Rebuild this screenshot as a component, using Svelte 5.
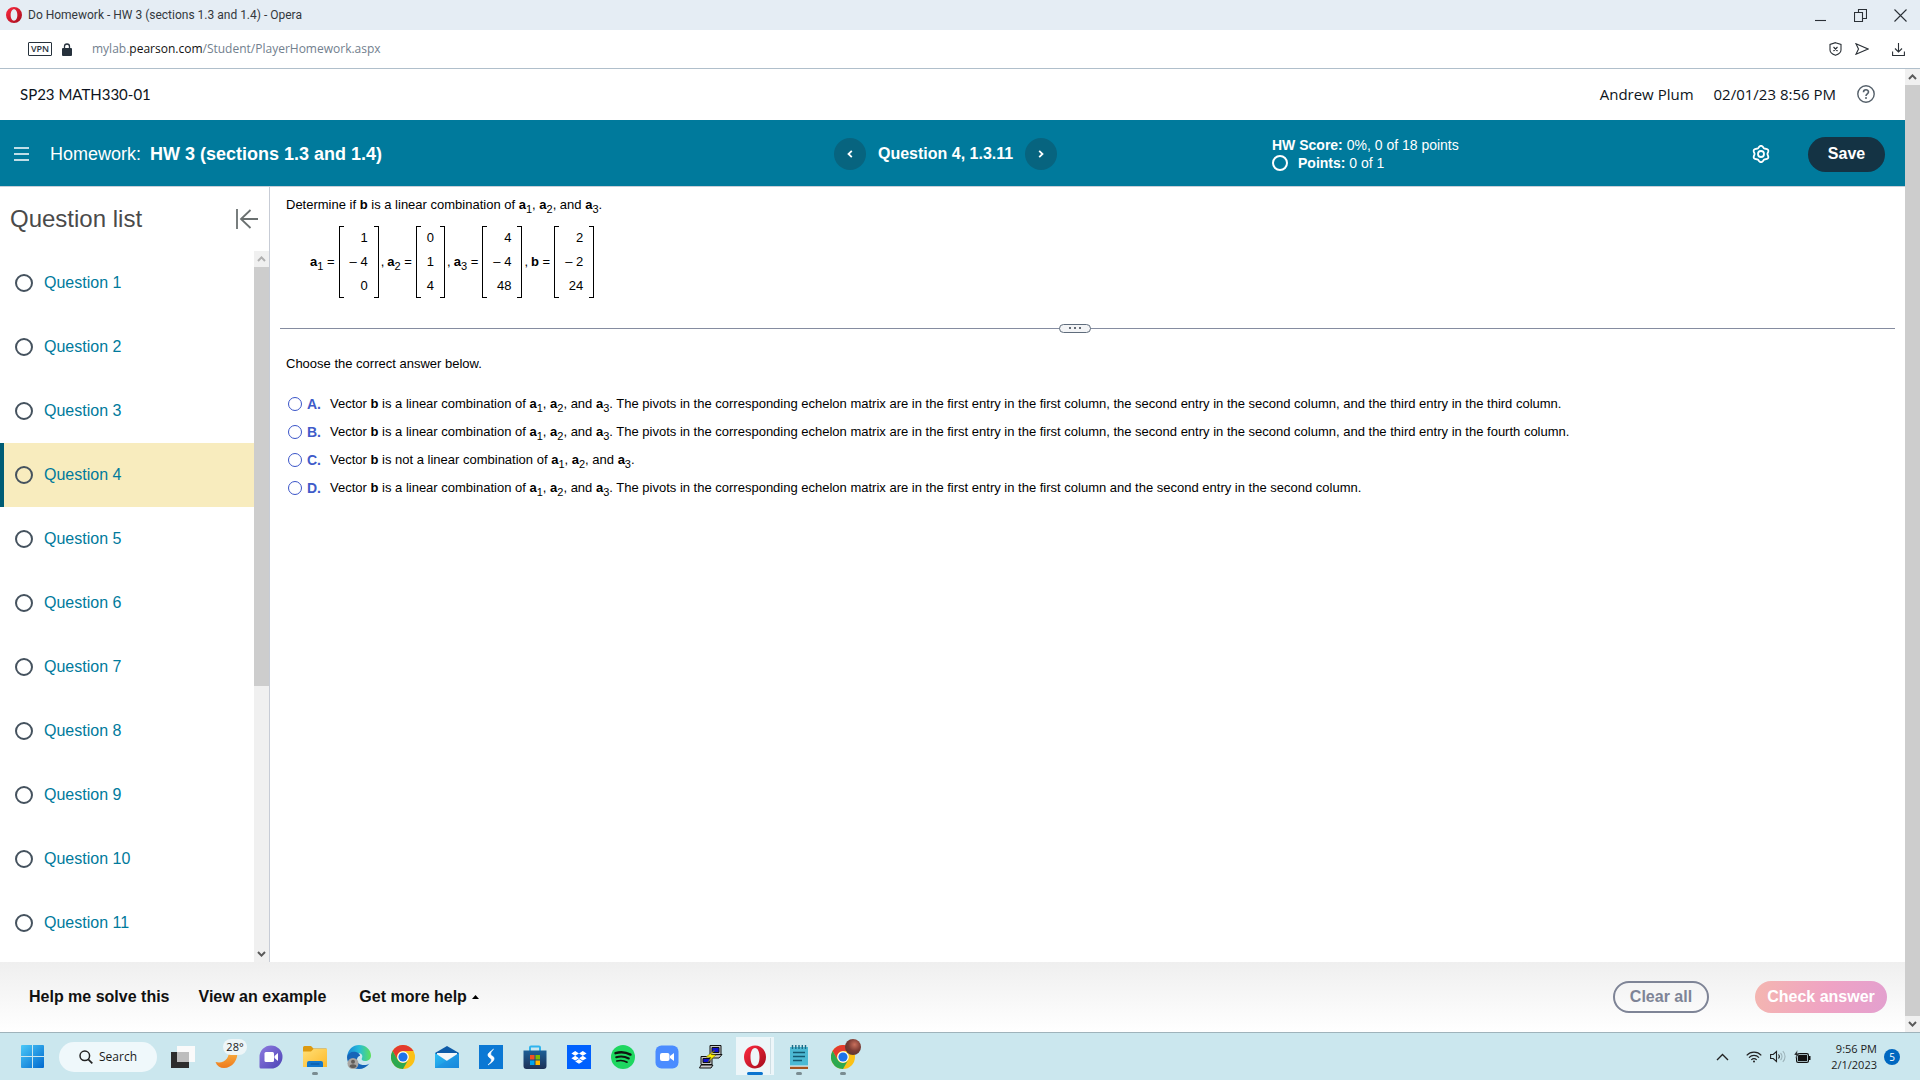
<script>
  const questions = Array.from({ length: 11 }, (_, i) => i + 1);
  const current = 4;

  const vectors = [
    { name: 'a', sub: '1', values: ['1', '– 4', '0'] },
    { name: 'a', sub: '2', values: ['0', '1', '4'] },
    { name: 'a', sub: '3', values: ['4', '– 4', '48'] },
    { name: 'b', sub: '', values: ['2', '– 2', '24'] }
  ];

  const pivots = ' The pivots in the corresponding echelon matrix are in the first entry in the first column';
  const options = [
    { letter: 'A', verb: 'is a', tail: pivots + ', the second entry in the second column, and the third entry in the third column.' },
    { letter: 'B', verb: 'is a', tail: pivots + ', the second entry in the second column, and the third entry in the fourth column.' },
    { letter: 'C', verb: 'is not a', tail: '' },
    { letter: 'D', verb: 'is a', tail: pivots + ' and the second entry in the second column.' }
  ];

  // Six-lobed outline of the settings gear
  const gear = Array.from({ length: 72 }, (_, i) => {
    const t = (i / 72) * Math.PI * 2;
    const r = 7.3 + 0.9 * Math.cos(6 * t);
    return (9 + r * Math.sin(t)).toFixed(2) + ',' + (9 - r * Math.cos(t)).toFixed(2);
  }).join(' ');

  let answer = $state('');
</script>

{#snippet terms()}<b>a</b><sub>1</sub>, <b>a</b><sub>2</sub>, and <b>a</b><sub>3</sub>.{/snippet}

{#snippet chrome()}
  <circle cx="12" cy="12" r="12" fill="#fbc116" />
  <path d="M1.6 6A12 12 0 0 1 22.4 6H12A6 6 0 0 0 6.8 15z" fill="#e33b2e" />
  <path d="M1.6 6A12 12 0 0 0 12 24L17.2 15A6 6 0 0 1 6.8 15z" fill="#2da94f" />
  <circle cx="12" cy="12" r="5.8" fill="#fff" />
  <circle cx="12" cy="12" r="4.6" fill="#1f73e8" />
{/snippet}

{#snippet chevron(up)}
  <svg width="9" height="6" viewBox="0 0 9 6" aria-hidden="true">
    <path d={up ? 'M1 5L4.5 1.4 8 5' : 'M1 1L4.5 4.6 8 1'} fill="none" stroke="currentColor" stroke-width="2" />
  </svg>
{/snippet}

<svg class="defs" width="0" height="0" aria-hidden="true">
  <defs>
    <linearGradient id="opera" x1="0" y1="0" x2="1" y2="1"><stop offset="0" stop-color="#ff2b40" /><stop offset="1" stop-color="#a30c1c" /></linearGradient>
    <linearGradient id="win" x1="0" y1="0" x2="1" y2="1"><stop offset="0" stop-color="#4cc9f8" /><stop offset="1" stop-color="#0069cf" /></linearGradient>
    <linearGradient id="moon" x1="0" y1="0" x2="0" y2="1"><stop offset="0" stop-color="#fbbd4a" /><stop offset="1" stop-color="#ee7a1c" /></linearGradient>
    <linearGradient id="chat" x1="0" y1="0" x2="1" y2="1"><stop offset="0" stop-color="#8f7be0" /><stop offset="1" stop-color="#4c43b5" /></linearGradient>
    <linearGradient id="folder" x1="0" y1="0" x2="1" y2="1"><stop offset="0" stop-color="#ffdf76" /><stop offset="1" stop-color="#fdb92a" /></linearGradient>
    <linearGradient id="edge" x1="0" y1="0" x2="1" y2="0"><stop offset="0" stop-color="#1683d8" /><stop offset="0.5" stop-color="#27bcd8" /><stop offset="1" stop-color="#5fe05a" /></linearGradient>
    <linearGradient id="bag" x1="0" y1="0" x2="0" y2="1"><stop offset="0" stop-color="#1d5f97" /><stop offset="1" stop-color="#1d3056" /></linearGradient>
    <linearGradient id="mail" x1="0" y1="0" x2="1" y2="1"><stop offset="0" stop-color="#2cc0f6" /><stop offset="1" stop-color="#1583d8" /></linearGradient>
  </defs>
</svg>

<div class="window">
  <header class="titlebar">
    <svg width="16" height="16" viewBox="0 0 24 24" aria-hidden="true">
      <path fill="url(#opera)" fill-rule="evenodd" d="M12 0a12 12 0 1 0 0 24a12 12 0 1 0 0-24zM12 3.500c3 0 5 3.700 5 8.500s-2 8.500-5 8.500s-5-3.700-5-8.500s2-8.500 5-8.500z" />
    </svg>
    <span class="title">Do Homework - HW 3 (sections 1.3 and 1.4) - Opera</span>
    <div class="winbtns">
      <button aria-label="Minimize"><svg width="13" height="13" viewBox="0 0 13 13"><path d="M1 11.500h11" /></svg></button>
      <button aria-label="Restore"><svg width="13" height="13" viewBox="0 0 13 13"><path d="M.5 3.500h8v9h-8zM4.500 3.500v-3h8v9h-4" /></svg></button>
      <button aria-label="Close"><svg width="13" height="13" viewBox="0 0 13 13"><path d="M.5.5l12 12M12.500.5l-12 12" /></svg></button>
    </div>
  </header>

  <div class="address">
    <span class="vpn">VPN</span>
    <svg class="lock" width="10" height="13" viewBox="0 0 10 13" aria-hidden="true"><rect y="5" width="10" height="8" rx="1" fill="#26313c" /><path d="M2.500 5.500V3.500a2.500 2.500 0 0 1 5 0v2" fill="none" stroke="#26313c" stroke-width="1.300" /></svg>
    <a class="url" href="#top">mylab.<span>pearson.com</span>/Student/PlayerHomework.aspx</a>
    <div class="tools">
      <button aria-label="Blocker"><svg width="13" height="14" viewBox="0 0 13 14"><path d="M6.500.7L12 2.500v5.500c0 2.500-2 4-5.500 5.300C3 12 1 10.500 1 8V2.500zM4.500 5l4 4M8.500 5l-4 4" /></svg></button>
      <button aria-label="My Flow"><svg width="14" height="12" viewBox="0 0 14 12"><path d="M1 .8L13 6 1 11.200 3.500 6z" /></svg></button>
      <button aria-label="Downloads" class="dl"><svg width="13" height="13" viewBox="0 0 13 13"><path d="M6.500 0v9M3 5.500L6.500 9 10 5.500M.6 8.500v4h11.800v-4" /></svg></button>
    </div>
  </div>

  <div class="viewport">
    <div class="page">
      <div class="course">
        <span class="code">SP23 MATH330-01</span>
        <span class="user">Andrew Plum</span>
        <span class="time">02/01/23 8:56 PM</span>
        <button aria-label="Help"><svg width="18" height="18" viewBox="0 0 18 18"><circle cx="9" cy="9" r="8.200" fill="none" stroke="#55606a" stroke-width="1.400" /><path d="M6.500 7.200C6.500 4 11.500 4 11.500 7c0 2-2.500 1.800-2.500 4" fill="none" stroke="#55606a" stroke-width="1.600" /><circle cx="9" cy="13" r="1" fill="#55606a" /></svg></button>
      </div>

      <div class="banner">
        <div class="work">
          <button aria-label="Menu"><svg width="15" height="14" viewBox="0 0 15 14"><path d="M0 1h15M0 7h15M0 13h15" stroke="#fff" stroke-width="1.600" /></svg></button>
          <h1><span>Homework:</span> HW 3 (sections 1.3 and 1.4)</h1>
        </div>
        <div class="pager">
          <button aria-label="Previous question"><svg width="6" height="8" viewBox="0 0 6 8"><path d="M4.800.8L1.500 4l3.300 3.200" /></svg></button>
          <strong>Question 4, 1.3.11</strong>
          <button aria-label="Next question"><svg width="6" height="8" viewBox="0 0 6 8"><path d="M1.200.8L4.500 4 1.200 7.200" /></svg></button>
        </div>
        <div class="scores">
          <div class="score">
            <div><b>HW Score:</b> 0%, 0 of 18 points</div>
            <div class="points"><i></i><span><b>Points:</b> 0 of 1</span></div>
          </div>
          <button aria-label="Settings"><svg width="18" height="18" viewBox="0 0 18 18" fill="none" stroke="#fff" stroke-width="1.800"><polygon points={gear} /><circle cx="9" cy="9" r="3" /></svg></button>
          <button class="save">Save</button>
        </div>
      </div>

      <div class="body">
        <aside>
          <div class="listhead">
            <h2>Question list</h2>
            <button aria-label="Collapse list"><svg width="22" height="20" viewBox="0 0 22 20"><path d="M1 0v20M22 10H5M14.500 1L5 10l9.500 9" fill="none" stroke="#6a7070" stroke-width="1.800" /></svg></button>
          </div>
          <div class="listwrap">
            <nav>
              {#each questions as n}
                <a href="#q{n}" class:current={n === current}><i></i>Question {n}</a>
              {/each}
            </nav>
            <div class="scroll inner">
              <span class="arrow off">{@render chevron(true)}</span>
              <span class="thumb"></span>
              <span class="track"></span>
              <span class="arrow">{@render chevron(false)}</span>
            </div>
          </div>
        </aside>

        <main>
          <section class="problem">
            <p>Determine if <b>b</b> is a linear combination of {@render terms()}</p>
            <div class="vectors">
              {#each vectors as v, i}
                <span class="name"><b>{v.name}</b>{#if v.sub}<sub>{v.sub}</sub>{/if} =</span>
                <table>
                  <tbody>
                    {#each v.values as value}<tr><td>{value}</td></tr>{/each}
                  </tbody>
                </table>
                {#if i < vectors.length - 1}<span class="comma">,</span>{/if}
              {/each}
            </div>
          </section>
          <div class="divider"><button aria-label="Resize panes"><i></i><i></i><i></i></button></div>
          <section class="choices">
            <p>Choose the correct answer below.</p>
            {#each options as o}
              <label>
                <input type="radio" name="answer" value={o.letter} bind:group={answer} />
                <span class="letter">{o.letter}.</span>
                <span>Vector <b>b</b> {o.verb} linear combination of {@render terms()}{o.tail}</span>
              </label>
            {/each}
          </section>
        </main>
      </div>

      <footer>
        <button class="help">Help me solve this</button>
        <button class="help">View an example</button>
        <button class="help more">Get more help <svg width="7" height="4" viewBox="0 0 7 4"><path d="M0 4L3.500 0 7 4z" /></svg></button>
        <button class="clear">Clear all</button>
        <button class="check">Check answer</button>
      </footer>
    </div>
    <div class="scroll outer">
      <span class="arrow">{@render chevron(true)}</span>
      <span class="thumb"></span>
      <span class="arrow">{@render chevron(false)}</span>
    </div>
  </div>

  <div class="taskbar">
    <button class="slot" aria-label="Start"><svg width="23" height="23" viewBox="0 0 23 23"><path fill="url(#win)" d="M1 0h10v11H0V1a1 1 0 0 1 1-1zM12 0h10a1 1 0 0 1 1 1v10H12zM0 12h11v11H1a1 1 0 0 1-1-1zM12 12h11v10a1 1 0 0 1-1 1H12z" /></svg></button>
    <button class="search"><svg width="14" height="14" viewBox="0 0 14 14"><circle cx="5.800" cy="5.800" r="4.800" fill="none" stroke="#222" stroke-width="1.500" /><path d="M9.300 9.300l4 4" stroke="#222" stroke-width="1.700" /></svg>Search</button>
    <button class="slot" aria-label="Task view"><svg width="24" height="24" viewBox="0 0 24 24"><path d="M0 7h18v16H0z" fill="#2d2d2d" /><path d="M6 1h18v16H6z" fill="#fafafa" /><path d="M6 7h12v10H6z" fill="#bdbdbd" /></svg></button>
    <button class="slot weather" aria-label="Weather"><svg width="24" height="24" viewBox="0 0 24 24"><path d="M22 5C24 15 17 23 9 23 5 23 2 21 .5 17 9 19 15 14 14 3z" fill="url(#moon)" /></svg><span>28°</span></button>
    <button class="slot" aria-label="Chat"><svg width="24" height="24" viewBox="0 0 24 24"><path d="M12 .5a11.500 11.500 0 1 1 0 23H2a1.500 1.500 0 0 1-1.500-1.500V12A11.500 11.500 0 0 1 12 .5z" fill="url(#chat)" /><rect x="5.500" y="7" width="9.500" height="10" rx="1.500" fill="#fff" /><path d="M15.500 11l3.500-3v8l-3.500-3z" fill="#fff" /></svg></button>
    <button class="slot open" aria-label="File Explorer"><svg width="24" height="24" viewBox="0 0 24 24"><path d="M0 2.500A1.500 1.500 0 0 1 1.500 1H8l2.500 2.500H23a1 1 0 0 1 1 1V12H0z" fill="#dd9a10" /><path d="M0 6.500h8L10.500 4H24v18H0z" fill="url(#folder)" /><path d="M4 18a2 2 0 0 1 2-2h12a2 2 0 0 1 2 2v4H4z" fill="#1177cc" /><path d="M7.500 19h9" stroke="#0b57a0" stroke-width="1.200" /></svg></button>
    <button class="slot" aria-label="Edge"><svg width="24" height="24" viewBox="0 0 24 24"><path d="M0 12C1 4 6 0 12 0c7 0 12 5 12 10.500 0 4-3 5.500-6 5.500-3 0-4-1.500-3-3 1-2 0-5-4-5-5 0-9 3-11 4z" fill="url(#edge)" /><path d="M0 12c1-4 5-6 9-5 3 1 4 2.500 4 4-4 0-5 9 4 9 2 0 4-.5 5.500-1.500C20 22 16 24 12 24 5 24 0 19 0 12z" fill="#1565b8" /><circle cx="6" cy="18.500" r="5.500" fill="#a8a5a2" /><circle cx="6" cy="16.800" r="2" fill="#625d59" /><path d="M2.500 21.500c0-3 7-3 7 0-2 2-5 2-7 0z" fill="#625d59" /></svg></button>
    <button class="slot" aria-label="Chrome"><svg width="24" height="24" viewBox="0 0 24 24">{@render chrome()}</svg></button>
    <button class="slot" aria-label="Mail"><svg width="24" height="24" viewBox="0 0 24 24"><path d="M0 8l12-7 12 7v4H0z" fill="#0e5ba8" /><path d="M2 8h20v8H2z" fill="#f5f7f9" /><path d="M0 8l12 8 12-8v15H0z" fill="url(#mail)" /><path d="M0 23L24 8v15z" fill="#1c8fe0" opacity=".45" /></svg></button>
    <button class="slot" aria-label="Shortcut"><svg width="24" height="24" viewBox="0 0 24 24"><path d="M0 0h24v24H0z" fill="#0b78d4" /><path d="M14.500 4C12 6.500 8.500 8 9 10.500S12.500 13 12.500 15 10.500 18 9 20C13 17.500 15.500 15.500 15 13S11.700 11.500 11.700 9 13.500 6 14.500 4z" fill="#fff" stroke="#fff" stroke-width=".6" /></svg></button>
    <button class="slot" aria-label="Store"><svg width="24" height="24" viewBox="0 0 24 24"><path d="M7 6V2.500A1 1 0 0 1 8 1.500h8a1 1 0 0 1 1 1V6" fill="none" stroke="#2fb4ee" stroke-width="2" /><path d="M.5 5.500h23V21a3 3 0 0 1-3 3h-17a3 3 0 0 1-3-3z" fill="url(#bag)" /><path d="M7 10h4.500v4.500H7z" fill="#f25022" /><path d="M12.500 10H17v4.500h-4.500z" fill="#7fba00" /><path d="M7 15.500h4.500V20H7z" fill="#00a4ef" /><path d="M12.500 15.500H17V20h-4.500z" fill="#ffb900" /></svg></button>
    <button class="slot" aria-label="Dropbox"><svg width="24" height="24" viewBox="0 0 24 24"><path d="M0 0h24v24H0z" fill="#0061fe" /><path d="M8.200 6l3.800 2.400-3.800 2.400-3.800-2.400zM15.800 6l3.800 2.400-3.800 2.400L12 8.400zM8.200 10.800l3.800 2.400-3.800 2.400-3.800-2.400zM15.800 10.800l3.800 2.400-3.800 2.400-3.800-2.400zM12 14l3.800 2.400-3.800 2.400-3.800-2.400z" fill="#fff" /></svg></button>
    <button class="slot" aria-label="Spotify"><svg width="24" height="24" viewBox="0 0 24 24"><circle cx="12" cy="12" r="12" fill="#1ed760" /><g fill="none" stroke="#101510" stroke-linecap="round"><path d="M4.500 8.200c5-1.600 10.500-1 15 1.400" stroke-width="2.400" /><path d="M5.200 12.200c4.300-1.300 8.800-.8 12.600 1.300" stroke-width="2" /><path d="M5.800 16c3.500-1 7.200-.6 10.300 1.200" stroke-width="1.600" /></g></svg></button>
    <button class="slot" aria-label="Zoom"><svg width="24" height="24" viewBox="0 0 24 24"><rect x=".5" y=".5" width="23" height="23" rx="6" fill="#4a8cff" /><rect x="5" y="8" width="9.500" height="8" rx="2" fill="#fff" /><path d="M15 11l4-3v8l-4-3z" fill="#fff" /></svg></button>
    <button class="slot" aria-label="PuTTY"><svg width="24" height="24" viewBox="0 0 24 24"><g stroke="#111"><path d="M11 .5h11v9H11zM2 11.500h11v8H2z" fill="#c8c8c8" /><path d="M13 2.500h7v5h-7zM4 13.500h7v4H4z" fill="#1111d0" /><path d="M11 10l12-.5-3 3.500h-9zM2 20h12l-2 3H.5z" fill="#c8c8c8" /></g><path d="M16 5l-9 7 5 .5L9 17l8-7-5-.5z" fill="#fff200" stroke="#6b6500" stroke-width=".5" /></svg></button>
    <button class="slot active" aria-label="Opera"><svg width="24" height="24" viewBox="0 0 24 24"><path fill="url(#opera)" fill-rule="evenodd" d="M12 .5C5.500.5 1 5.500 1 12s4.500 11.500 11 11.500S23 18.500 23 12 18.500.5 12 .5zM12 3c3 0 4.500 4 4.500 9S15 21 12 21s-4.500-4-4.500-9S9 3 12 3z" /></svg></button>
    <button class="slot open" aria-label="Notepad"><svg width="24" height="24" viewBox="0 0 24 24"><path d="M3 2h18v19H3z" fill="#4cb9d3" /><path d="M3 21.500h18V24H3z" fill="#a4521e" /><path d="M3 20.500h18v1H3z" fill="#eee" /><path d="M5.500 0v4M8.800 0v4M12 0v4M15.300 0v4M18.500 0v4" stroke="#1b6b86" stroke-width="1.400" /><path d="M6 7.500h12M6 11.500h12M6 15.500h9" stroke="#14586f" stroke-width="1.500" /></svg></button>
    <button class="slot open profile" aria-label="Chrome profile"><svg width="24" height="24" viewBox="0 0 24 24">{@render chrome()}</svg><i></i></button>

    <div class="tray">
      <button aria-label="Hidden icons"><svg width="13" height="8" viewBox="0 0 13 8"><path d="M1 7l5.500-5.500L12 7" fill="none" stroke="#222" stroke-width="1.400" /></svg></button>
      <button class="status" aria-label="Network, sound and battery">
        <svg width="16" height="12" viewBox="0 0 16 12" fill="none" stroke="#222" stroke-width="1.200"><path d="M.7 4.300c4-4.300 10.600-4.300 14.600 0M3 6.600c2.800-3 7.200-3 10 0M5.300 8.800c1.600-1.700 3.800-1.700 5.400 0" /><circle cx="8" cy="10.600" r="1" fill="#222" stroke="none" /></svg>
        <svg width="16" height="13" viewBox="0 0 16 13" fill="none" stroke="#222" stroke-width="1.100"><path d="M.6 4.500h2.600L6.500 1.500v10L3.200 8.500H.6zM8.500 4.500c1 1.200 1 2.800 0 4" /><path d="M10.500 3c2 2 2 5 0 7M12.800 1.200c3 3 3 7.600 0 10.600" stroke="#9db4ba" /></svg>
        <svg width="17" height="13" viewBox="0 0 17 13"><rect x="2.600" y="3.600" width="11.800" height="8.800" rx="1.500" fill="none" stroke="#111" stroke-width="1.200" /><path d="M4 5h9v6H4zM15 6h1.500v4H15z" fill="#111" /><path d="M3.500 0L0 5h2.500L1 8.500 5.500 4H3z" fill="#111" stroke="#cbe7ee" stroke-width=".4" /></svg>
      </button>
      <div class="clock"><span>9:56 PM</span><span>2/1/2023</span></div>
      <span class="badge">5</span>
    </div>
  </div>
</div>

<style>
  :global(body) { margin: 0; }
  .window { min-height: 100vh; display: flex; flex-direction: column; font-family: "Liberation Sans", Arial, sans-serif; color: #000; background: #fff; }
  .window :global(*) { box-sizing: border-box; }
  .defs { position: absolute; }
  button { border: 0; padding: 0; margin: 0; background: none; font: inherit; color: inherit; cursor: pointer; display: flex; align-items: center; justify-content: center; }
  a { text-decoration: none; color: inherit; }
  h1, h2, p { margin: 0; font-weight: 400; }
  svg { display: block; flex: none; }

  .titlebar { height: 30px; background: #e5edf4; display: flex; align-items: center; padding: 0 13px 0 6px; }
  .title { margin-left: 6px; font: 12px/16px Roboto, "Open Sans", sans-serif; color: #33383d; flex: 1; }
  .winbtns { display: flex; gap: 27px; }
  .winbtns path, .tools path { fill: none; stroke: #2a3036; stroke-width: 1.1; }

  .address { height: 39px; border-bottom: 1px solid #b0bfcb; display: flex; align-items: center; padding: 0 15px 0 28px; }
  .vpn { border: 1px solid #26313c; border-radius: 1px; width: 24px; height: 14px; text-align: center; font: 600 9px/12px "Open Sans", sans-serif; color: #26313c; }
  .lock { margin-left: 10px; }
  .url { margin-left: 20px; font: 12px/18px "Open Sans", "Noto Sans", sans-serif; color: #72808e; flex: 1; }
  .url span { color: #111; }
  .tools { display: flex; align-items: center; gap: 13px; }
  .tools .dl { margin-left: 10px; }

  .viewport { flex: 1; display: flex; }
  .page { flex: 1; display: flex; flex-direction: column; min-width: 0; }

  .course { height: 51px; display: flex; align-items: center; padding: 0 30px 2px 20px; font: 15px/20px "Open Sans", "Noto Sans", sans-serif; color: #0d1420; }
  .code { flex: 1; font-family: Lato, sans-serif; }
  .time { margin: 0 21px 0 20px; }

  .banner { height: 67px; background: #007a9c; border-bottom: 1px solid #c8cfd8; color: #fff; display: grid; grid-template-columns: 834fr 438fr 633fr; align-items: center; padding-top: 2px; }
  .work { display: flex; align-items: center; padding-left: 14px; gap: 21px; }
  h1 { font-size: 18px; line-height: 24px; font-weight: 700; }
  h1 span { font-weight: 400; margin-right: 4px; }
  .pager { display: flex; align-items: center; gap: 12px; font-size: 16px; }
  .pager button { width: 32px; height: 32px; border-radius: 50%; background: #07647f; }
  .pager path { fill: none; stroke: #fff; stroke-width: 1.8; }
  .scores { display: flex; align-items: center; padding-right: 20px; }
  .score { flex: 1; font-size: 14px; line-height: 18px; }
  .points { display: flex; align-items: center; gap: 10px; }
  .points i { width: 16px; height: 16px; border: 2px solid #fff; border-radius: 50%; }
  .save { width: 77px; height: 35px; border-radius: 18px; background: #143344; font-weight: 700; font-size: 16px; margin-left: 38px; }

  .body { flex: 1; display: flex; }
  aside { width: 270px; flex: none; border-right: 1px solid #c7ccd6; display: flex; flex-direction: column; }
  .listhead { height: 64px; display: flex; align-items: center; justify-content: space-between; padding: 0 11px 0 10px; }
  h2 { font-size: 24px; line-height: 32px; color: #4a4a4a; }
  .listwrap { flex: 1; display: flex; }
  nav { flex: 1; }
  nav a { height: 64px; display: flex; align-items: center; gap: 11px; padding-left: 11px; border-left: 4px solid transparent; font-size: 16px; color: #007a9c; }
  nav a.current { background: #f8ecbe; border-left-color: #005d75; }
  nav i { width: 18px; height: 18px; border: 2px solid #45525e; border-radius: 50%; }

  .scroll { width: 15px; background: #f0f0f0; display: flex; flex-direction: column; color: #5a5a5a; }
  .arrow { height: 16px; display: flex; align-items: center; justify-content: center; }
  .off { color: #b0b0b0; }
  .thumb { flex: 1; background: #cdcdcd; }
  .inner .thumb { flex: 420; }
  .track { flex: 260; }

  main { flex: 1; min-width: 0; font-size: 13px; line-height: 16px; }
  sub { font-size: 11px; line-height: 0; vertical-align: -4px; }
  .problem { padding: 10px 16px 25px; }
  .vectors { display: flex; align-items: center; padding: 13px 0 0 24px; }
  table {
    border-collapse: collapse; margin-left: 4px; border-left: 1px solid #000; border-right: 1px solid #000; display: block; padding: 0 10px;
    background: linear-gradient(#000, #000) left top / 4px 1px no-repeat, linear-gradient(#000, #000) right top / 4px 1px no-repeat, linear-gradient(#000, #000) left bottom / 4px 1px no-repeat, linear-gradient(#000, #000) right bottom / 4px 1px no-repeat;
  }
  td { height: 24px; padding: 0; text-align: right; white-space: nowrap; font-size: 13px; }
  .comma { margin: 0 3px 0 2px; }
  .divider { height: 10px; margin: 0 10px; padding-right: 26px; display: flex; align-items: center; justify-content: center; background: linear-gradient(#858ca0, #858ca0) center / 100% 1px no-repeat; }
  .divider button { width: 32px; height: 9px; border: 1px solid #5f6c7c; border-radius: 5px; background: #f3f4f6; gap: 3px; }
  .divider i { width: 2px; height: 2px; background: #666c76; }
  .choices { padding: 23px 16px; }
  .choices p { margin-bottom: 18px; }
  label { height: 28px; display: flex; align-items: center; }
  input { appearance: none; width: 14px; height: 14px; margin: 0 5px 0 2px; border: 1px solid #3a54c8; border-radius: 50%; flex: none; }
  input:checked { background: #3a54c8; box-shadow: inset 0 0 0 2px #fff; }
  .letter { width: 23px; font-size: 14px; font-weight: 700; color: #3f5bc9; }

  footer { height: 70px; background: linear-gradient(#efefef, #fff); display: flex; align-items: center; padding: 0 18px 0 29px; font-weight: 700; font-size: 16px; }
  .help { margin-right: 29px; color: #111; }
  .more { gap: 5px; margin: 0 auto 0 4px; }
  .clear { width: 96px; height: 32px; border: 2px solid #7e8496; border-radius: 16px; color: #7e8496; }
  .check { width: 132px; height: 32px; border-radius: 16px; margin-left: 46px; color: #fff; background: linear-gradient(100deg, #f4b6b0, #efa3c4 55%, #e3a0cf); }

  .taskbar { height: 48px; border-top: 1px solid #9fb3bb; background: #cbe7ee; display: flex; align-items: center; padding: 0 20px 0 10px; font-family: "Open Sans", "Noto Sans", sans-serif; color: #1b1b1b; }
  .slot { width: 44px; height: 47px; position: relative; flex: none; }
  .search { width: 98px; height: 30px; border-radius: 15px; background: #eff8fb; margin: 0 4px 0 5px; gap: 6px; font-size: 12px; flex: none; }
  .weather span { position: absolute; left: 18px; top: 6px; width: 24px; height: 16px; border-radius: 8px; background: #eef6f8; font-size: 11px; line-height: 16px; }
  .open::after, .active::after { content: ""; position: absolute; left: 19px; bottom: 5px; width: 6px; height: 3px; border-radius: 2px; background: #7a8c91; }
  .active { background: linear-gradient(#cfdfe4, #cfdfe4) 37px 5px / 1px 36px no-repeat, linear-gradient(#edf6f9, #edf6f9) center 4px / 38px 38px no-repeat; }
  .active::after { left: 14px; width: 16px; background: #0b74cf; }
  .profile i { position: absolute; left: 24px; top: 6px; width: 16px; height: 16px; border-radius: 50%; background: radial-gradient(circle at 60% 35%, #c9705c, #7b3c34 45%, #463432); }
  .tray { margin-left: auto; display: flex; align-items: center; }
  .status { gap: 8px; margin: 0 20px 0 17px; }
  .clock { display: flex; flex-direction: column; align-items: flex-end; font-size: 11px; line-height: 16px; }
  .badge { margin-left: 7px; width: 16px; height: 16px; border-radius: 50%; background: #0067c0; color: #fff; font-size: 10px; line-height: 16px; text-align: center; }
</style>
